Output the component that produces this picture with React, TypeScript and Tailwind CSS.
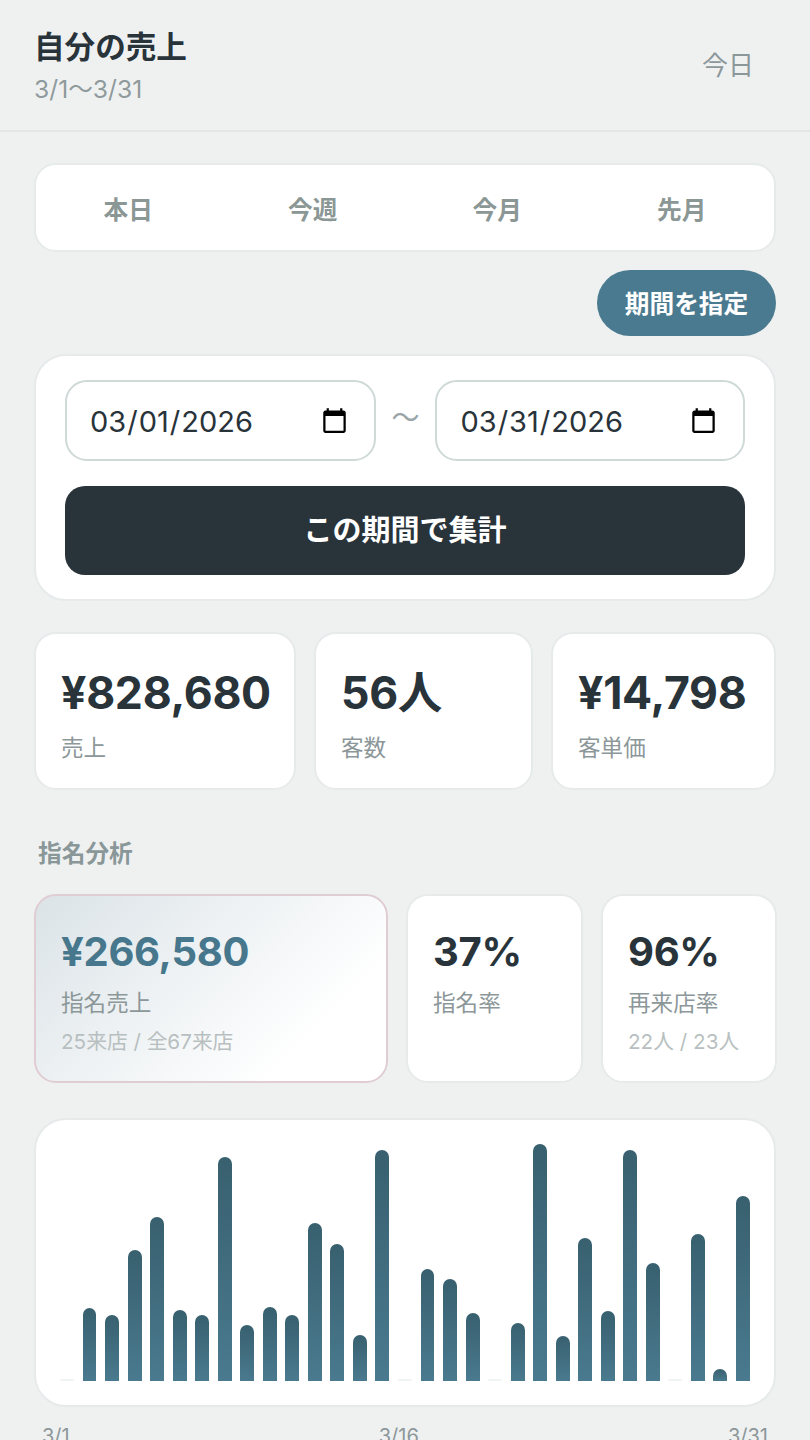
import React from "react";

const bars = [2, 73, 66, 131, 164, 71, 66, 224, 56, 74, 66, 158, 137, 46, 231, 2, 112, 102, 68, 2, 58, 237, 45, 143, 70, 231, 118, 2, 147, 12, 185];

const font = { fontFamily: '"Inter", "Noto Sans CJK JP", sans-serif' };

function Stat({ value, label, sub, big, accent }: { value: string; label: string; sub?: string; big?: boolean; accent?: boolean }) {
  return (
    <div className={`rounded-[22px] border-2 pl-[25px] pt-[31px] ${big ? "h-[158px]" : "h-[189px]"} ${accent ? "border-[#e0cdd3] bg-[linear-gradient(135deg,#dbe3e7,#ffffff_78%)]" : "border-[#e6eaea] bg-white"}`}>
      <div className={`font-bold whitespace-nowrap tracking-[-0.3px] ${big ? "text-[44.6px] leading-[56px]" : "text-[40px] leading-[50px]"} ${accent ? "text-[#47778c]" : "text-[#29333a]"}`}>{value}</div>
      <div className={`text-[22.6px] leading-[30px] text-[#8c9799] ${big ? "mt-[12px]" : "mt-[11px]"}`}>{label}</div>
      {sub && <div className="mt-[10px] text-[20.7px] leading-[28px] text-[#b8bfc0] whitespace-nowrap">{sub}</div>}
    </div>
  );
}

export default function App() {
  return (
    <div style={font} className="h-[1440px] w-[810px] overflow-hidden bg-[#eff1f1] text-[#29333a]">
      <header className="flex h-[132px] items-center justify-between border-b-2 border-[#e2e6e6] pl-[34px] pr-[56px]">
        <div className="mt-[5px]">
          <div className="text-[30.6px] leading-[38px] font-bold -mt-[1px]">自分の売上</div>
          <div className="mt-[6px] text-[24.7px] leading-[34px] text-[#8f9a9c]">3/1〜3/31</div>
        </div>
        <div className="text-[26px] text-[#8c9799]">今日</div>
      </header>
      <main className="px-[34px]">
        <div className="mt-[31px] grid h-[89px] grid-cols-4 items-center rounded-[22px] border-2 border-[#e6eaea] bg-white pt-[6px] text-center text-[24.7px] font-semibold text-[#8b9795]">
          <div>本日</div>
          <div>今週</div>
          <div>今月</div>
          <div>先月</div>
        </div>
        <div className="mt-[18px] flex justify-end">
          <button className="h-[66px] w-[179px] rounded-full bg-[#4a7a8f] pt-[4px] text-[24.7px] font-semibold text-white">期間を指定</button>
        </div>
        <div className="mt-[18px] rounded-[32px] border-2 border-[#e6eaea] bg-white px-[29px] py-[24px]">
          <div className="flex items-center">
            <input type="date" defaultValue="2026-03-01" className="h-[81px] w-[311px] rounded-[22px] border-2 border-[#cfd9d8] bg-white pl-[22px] pr-[23px] pt-[2px] text-[29px] text-[#29333a] outline-none" />
            <span className="-mt-[6px] w-[60px] text-center text-[28px] text-[#9aa5a7]">〜</span>
            <input type="date" defaultValue="2026-03-31" className="h-[81px] w-[310px] rounded-[22px] border-2 border-[#cfd9d8] bg-white pl-[22px] pr-[23px] pt-[2px] text-[29px] text-[#29333a] outline-none" />
          </div>
          <button className="mt-[25px] h-[89px] w-full rounded-[20px] bg-[#29333a] text-[29px] font-bold text-white">この期間で集計</button>
        </div>
        <div className="mt-[31px] grid grid-cols-[262px_219px_225px] gap-[18px]">
          <Stat big value="¥828,680" label="売上" />
          <Stat big value="56人" label="客数" />
          <Stat big value="¥14,798" label="客単価" />
        </div>
        <h2 className="mt-[49px] pl-[4px] text-[23.7px] leading-[30px] font-semibold text-[#8a9799]">指名分析</h2>
        <div className="mt-[25px] grid grid-cols-[354px_177px_176px] gap-[18px]">
          <Stat accent value="¥266,580" label="指名売上" sub="25来店 / 全67来店" />
          <Stat value="37%" label="指名率" />
          <Stat value="96%" label="再来店率" sub="22人 / 23人" />
        </div>
        <div className="mt-[35px] flex h-[289px] items-end gap-[8.6px] rounded-[32px] border-2 border-[#e6eaea] bg-white px-[24px] pb-[24px]">
          {bars.map((h, i) => (
            <div
              key={i}
              style={{ height: h }}
              className={`flex-1 rounded-t-[7px] ${h > 2 ? "bg-gradient-to-b from-[#38606f] to-[#4a7a8f]" : "bg-[#f1f4f4]"}`}
            />
          ))}
        </div>
        <div className="mt-[16px] flex justify-between px-[8px] text-[20px] leading-[26px] text-[#8c9799]">
          <span>3/1</span>
          <span>3/16</span>
          <span>3/31</span>
        </div>
      </main>
    </div>
  );
}
